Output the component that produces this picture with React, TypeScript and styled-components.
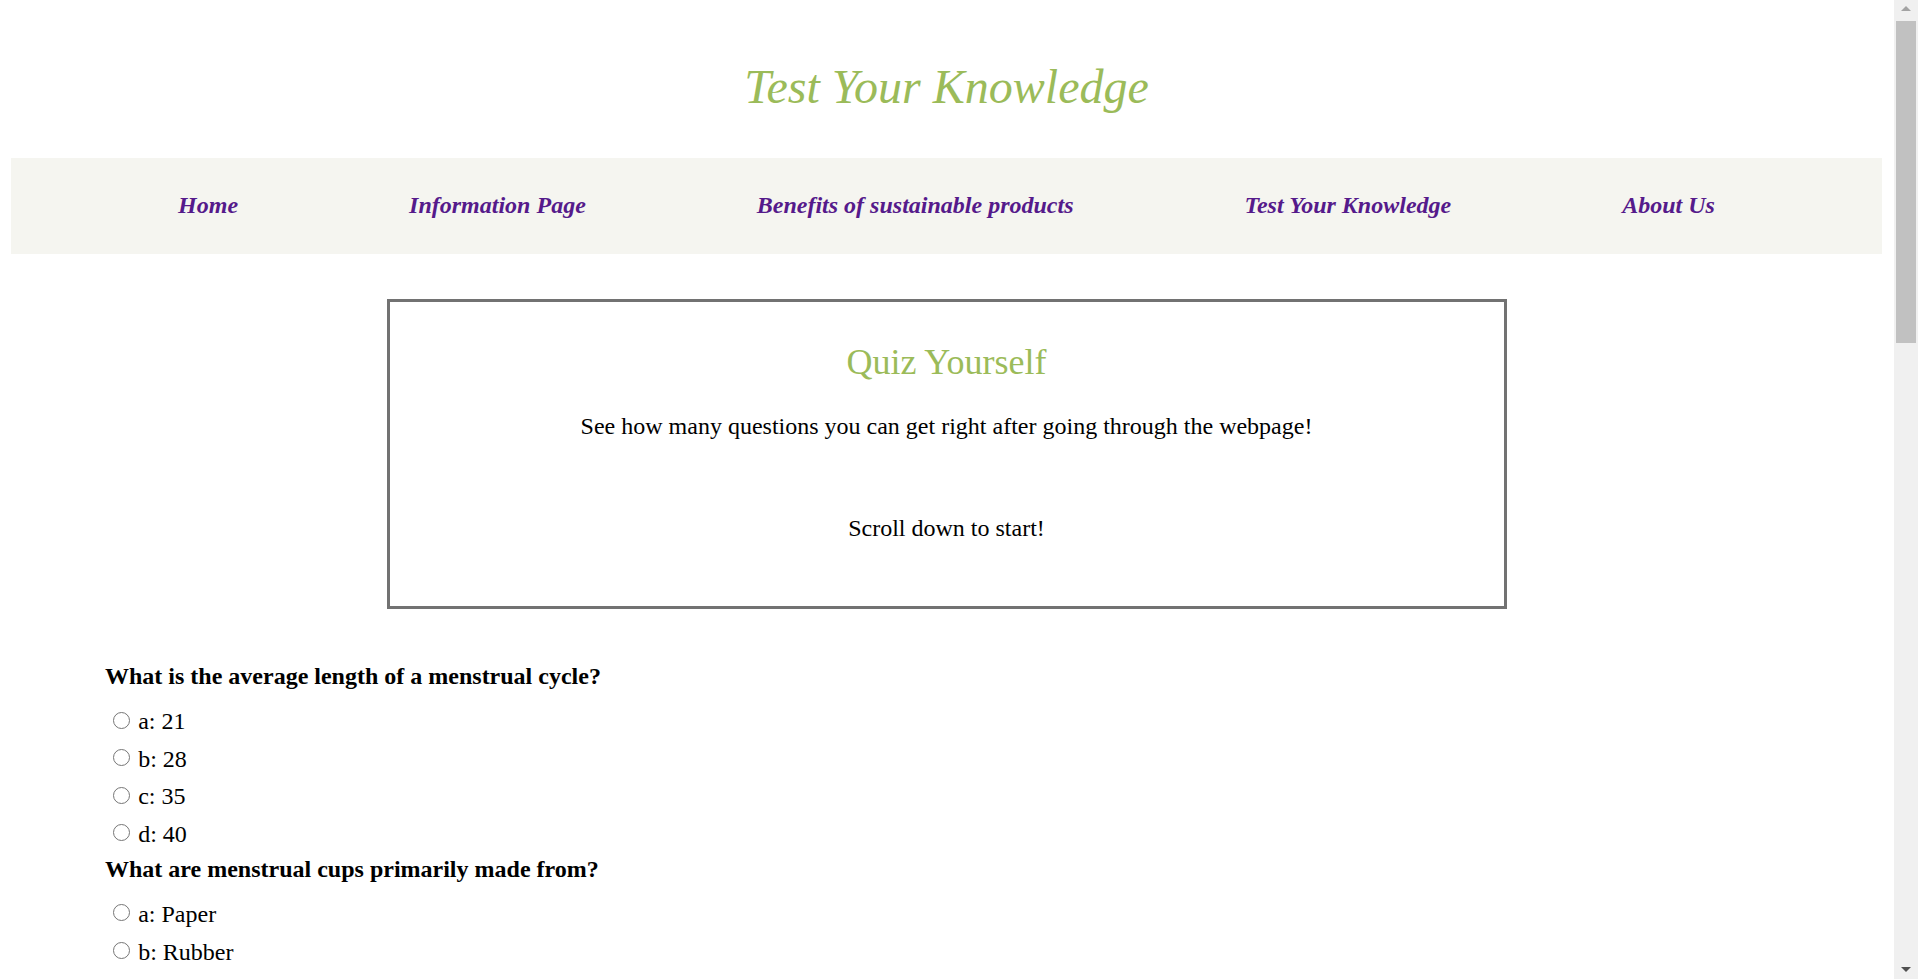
import React from "react";
import styled, { createGlobalStyle } from "styled-components";

const Global = createGlobalStyle`
  html, body {
    margin: 0;
    padding: 0;
    background: #ffffff;
  }
  body {
    font-family: "Liberation Serif", "Times New Roman", serif;
    color: #000000;
  }
`;

const Page = styled.div`
  width: 1871px;
  margin-left: 11px;
`;

const Title = styled.h1`
  margin: 59px 0 43px;
  font-size: 48px;
  line-height: 56px;
  font-style: italic;
  font-weight: normal;
  text-align: center;
  color: #9bbb59;
`;

const Nav = styled.nav`
  display: flex;
  justify-content: center;
  align-items: center;
  height: 96px;
  background: #f5f5f0;
`;

const NavLink = styled.a`
  padding: 0 85.5px 3px;
  font-size: 24px;
  line-height: 28px;
  font-weight: bold;
  font-style: italic;
  color: #551a8b;
  text-decoration: none;
`;

const IntroBox = styled.section`
  box-sizing: border-box;
  width: 1120px;
  margin: 45px auto 0;
  padding: 39px 20px 64px;
  border: 3px solid #727272;
  text-align: center;
`;

const IntroHeading = styled.h2`
  margin: 0 0 29px;
  font-size: 36px;
  line-height: 42px;
  font-weight: normal;
  color: #9bbb59;
`;

const IntroText = styled.p<{ $gap?: number }>`
  margin: ${(p) => p.$gap ?? 0}px 0 0;
  font-size: 24px;
  line-height: 28px;
`;

const Quiz = styled.form`
  margin-top: 53px;
  padding-left: 94px;
`;

const Question = styled.fieldset`
  margin: 0 0 7px;
  padding: 0;
  border: none;
`;

const QuestionText = styled.legend`
  padding: 0;
  font-size: 24px;
  line-height: 28px;
  font-weight: bold;
`;

const Options = styled.div`
  display: flex;
  flex-direction: column;
  gap: 9.5px;
  margin-top: 17.3px;
`;

const Option = styled.label`
  display: flex;
  align-items: flex-start;
  font-size: 24px;
  line-height: 28px;
`;

const Radio = styled.input`
  appearance: none;
  box-sizing: border-box;
  width: 17px;
  height: 17px;
  margin: 4.3px 8px 0 8.2px;
  border: 1.3px solid #767676;
  border-radius: 50%;
  background: #ffffff;
  flex: none;
`;

const ScrollTrack = styled.div`
  position: fixed;
  top: 0;
  right: 0;
  width: 24px;
  height: 100vh;
  background: #f0f0f0;
`;

const ScrollThumb = styled.div`
  position: absolute;
  top: 21px;
  left: 2px;
  width: 20px;
  height: 322px;
  background: #c1c1c1;
`;

const ScrollArrow = styled.div<{ $down?: boolean }>`
  position: absolute;
  left: 7px;
  width: 0;
  height: 0;
  border-left: 5.5px solid transparent;
  border-right: 5.5px solid transparent;
  ${(p) =>
    p.$down
      ? `bottom: 7px; border-top: 5px solid #505050;`
      : `top: 6px; border-bottom: 5px solid #a3a3a3;`}
`;

const navItems = [
  "Home",
  "Information Page",
  "Benefits of sustainable products",
  "Test Your Knowledge",
  "About Us",
];

const questions: { q: string; options: string[] }[] = [
  { q: "What is the average length of a menstrual cycle?", options: ["21", "28", "35", "40"] },
  { q: "What are menstrual cups primarily made from?", options: ["Paper", "Rubber", "Silicone", "Cotton"] },
];

export default function App() {
  return (
    <>
      <Global />
      <Page>
        <Title>Test Your Knowledge</Title>
        <Nav>
          {navItems.map((item) => (
            <NavLink key={item} href="#">
              {item}
            </NavLink>
          ))}
        </Nav>
        <IntroBox>
          <IntroHeading>Quiz Yourself</IntroHeading>
          <IntroText>See how many questions you can get right after going through the webpage!</IntroText>
          <IntroText $gap={74}>Scroll down to start!</IntroText>
        </IntroBox>
        <Quiz onSubmit={(e) => e.preventDefault()}>
          {questions.map((item, qi) => (
            <Question key={qi}>
              <QuestionText>{item.q}</QuestionText>
              <Options>
                {item.options.map((opt, oi) => {
                  const letter = "abcd"[oi];
                  return (
                    <Option key={oi}>
                      <Radio type="radio" name={`q${qi}`} value={letter} />
                      {letter}: {opt}
                    </Option>
                  );
                })}
              </Options>
            </Question>
          ))}
        </Quiz>
      </Page>
      <ScrollTrack aria-hidden="true">
        <ScrollArrow />
        <ScrollThumb />
        <ScrollArrow $down />
      </ScrollTrack>
    </>
  );
}
